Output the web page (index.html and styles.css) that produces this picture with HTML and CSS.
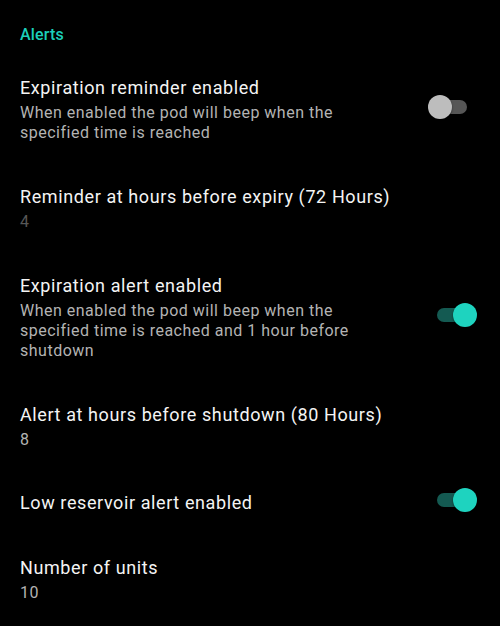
FILE: index.html
```html
<!DOCTYPE html>
<html lang="en">
<head>
<meta charset="utf-8">
<title>Alerts</title>
<link rel="stylesheet" href="styles.css">
</head>
<body>
<main class="screen">
  <h2 class="category">Alerts</h2>

  <div class="pref">
    <div class="pref-text">
      <div class="pref-title">Expiration reminder enabled</div>
      <div class="pref-summary">When enabled the pod will beep when the specified time is reached</div>
    </div>
    <div class="switch"><span class="track"></span><span class="thumb"></span></div>
  </div>

  <div class="pref">
    <div class="pref-text">
      <div class="pref-title">Reminder at hours before expiry (72 Hours)</div>
      <div class="pref-summary disabled">4</div>
    </div>
  </div>

  <div class="pref">
    <div class="pref-text">
      <div class="pref-title">Expiration alert enabled</div>
      <div class="pref-summary">When enabled the pod will beep when the specified time is reached and 1 hour before shutdown</div>
    </div>
    <div class="switch on"><span class="track"></span><span class="thumb"></span></div>
  </div>

  <div class="pref">
    <div class="pref-text">
      <div class="pref-title">Alert at hours before shutdown (80 Hours)</div>
      <div class="pref-summary">8</div>
    </div>
  </div>

  <div class="pref compact">
    <div class="pref-text">
      <div class="pref-title">Low reservoir alert enabled</div>
    </div>
    <div class="switch on"><span class="track"></span><span class="thumb"></span></div>
  </div>

  <div class="pref">
    <div class="pref-text">
      <div class="pref-title">Number of units</div>
      <div class="pref-summary">10</div>
    </div>
  </div>
</main>
</body>
</html>
```

FILE: styles.css
```css
html, body {
  margin: 0;
  padding: 0;
  background: #000;
}

body {
  font-family: Roboto, "Noto Sans", "Liberation Sans", sans-serif;
  width: 500px;
  height: 626px;
  overflow: hidden;
}

.screen {
  display: flex;
  flex-direction: column;
}

.category {
  margin: 0 0 10px 0;
  padding: 25px 20px 0 20px;
  font-size: 16px;
  line-height: 20px;
  font-weight: 500;
  letter-spacing: 0.15px;
  color: #1ccfbb;
}

.pref {
  display: flex;
  align-items: center;
  padding: 21px 23px 21px 20px;
}

.pref.compact {
  padding-top: 17px;
  padding-bottom: 18px;
}

.pref-text {
  flex: 1;
  min-width: 0;
}

.pref-title {
  font-size: 18px;
  line-height: 24px;
  letter-spacing: 0.6px;
  color: #f4f4f4;
}

.pref-summary {
  max-width: 370px;
  margin-top: 3px;
  font-size: 16px;
  line-height: 20px;
  letter-spacing: 0.5px;
  color: #b3b3b3;
}

.pref-summary.disabled {
  color: #575757;
}

.switch {
  position: relative;
  flex: none;
  width: 49px;
  height: 24px;
  margin-left: 8px;
  margin-bottom: 5px;
}

.switch .track {
  position: absolute;
  left: 9px;
  top: 5px;
  width: 30px;
  height: 14px;
  border-radius: 7px;
  background: #565656;
}

.switch .thumb {
  position: absolute;
  left: 0;
  top: 0;
  width: 24px;
  height: 24px;
  border-radius: 50%;
  background: #bdbdbd;
  box-shadow: 0 1px 2px rgba(0, 0, 0, 0.5);
}

.switch.on .track {
  background: #145a52;
}

.switch.on .thumb {
  left: 25px;
  background: #1ed3bf;
}
```
